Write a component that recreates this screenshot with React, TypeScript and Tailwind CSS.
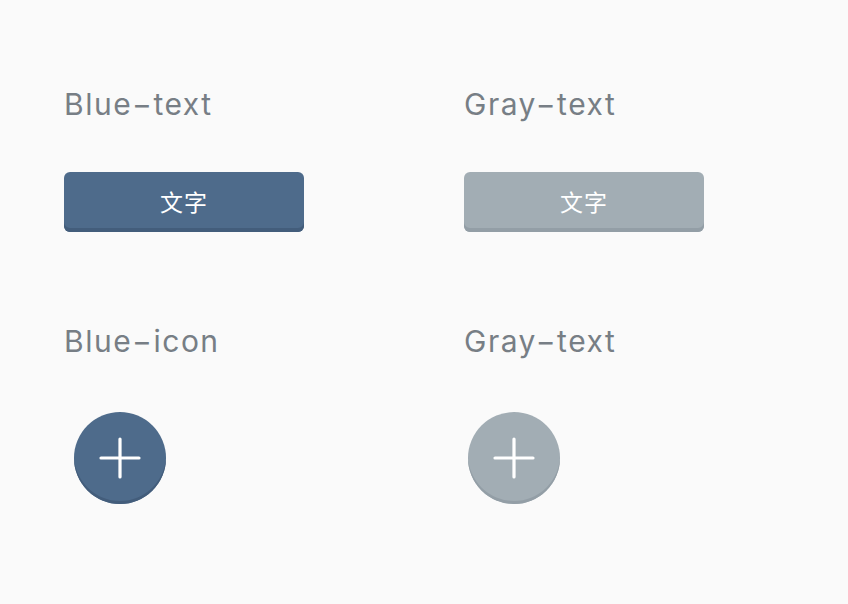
import React from "react";

const labelCls =
  "h-[36px] text-[30px] font-normal leading-[36px] tracking-[1.5px] text-[#777e85] whitespace-nowrap";
const font = { fontFamily: 'Inter, "Noto Sans CJK SC", sans-serif' };
const cjk = { fontFamily: '"Noto Sans CJK SC", sans-serif' };

function Plus() {
  return (
    <svg width="42" height="42" viewBox="0 0 42 42" fill="none">
      <path d="M21 2V40M2 21H40" stroke="white" strokeWidth="3.2" strokeLinecap="round" />
    </svg>
  );
}

export default function App() {
  return (
    <div className="w-[848px] h-[604px] bg-[#fafafa] pt-[86px] pl-[64px]" style={font}>
      <div className="flex">
        <div className="w-[400px] shrink-0 flex flex-col">
          <div className={labelCls}>Blue−text</div>
          <div className="mt-[50px] w-[240px] h-[60px] rounded-[6px] bg-[#4e6b8b] shadow-[inset_0_-4px_0_#435d7b] flex items-center justify-center text-white text-[23px] tracking-[1px] leading-none pb-[2px]" style={cjk}>
            文字
          </div>
        </div>
        <div className="w-[400px] shrink-0 flex flex-col">
          <div className={labelCls}>Gray−text</div>
          <div className="mt-[50px] w-[240px] h-[60px] rounded-[6px] bg-[#a2adb4] shadow-[inset_0_-4px_0_#939ea6] flex items-center justify-center text-white text-[23px] tracking-[1px] leading-none pb-[2px]" style={cjk}>
            文字
          </div>
        </div>
      </div>
      <div className="flex mt-[91px]">
        <div className="w-[400px] shrink-0 flex flex-col">
          <div className={labelCls}>Blue−icon</div>
          <div className="mt-[53px] ml-[10px] w-[92px] h-[92px] rounded-full bg-[#4e6b8b] shadow-[inset_0_-3px_0_#435d7b] flex items-center justify-center">
            <Plus />
          </div>
        </div>
        <div className="w-[400px] shrink-0 flex flex-col">
          <div className={labelCls}>Gray−text</div>
          <div className="mt-[53px] ml-[4px] w-[92px] h-[92px] rounded-full bg-[#a2adb4] shadow-[inset_0_-3px_0_#939ea6] flex items-center justify-center">
            <Plus />
          </div>
        </div>
      </div>
    </div>
  );
}
